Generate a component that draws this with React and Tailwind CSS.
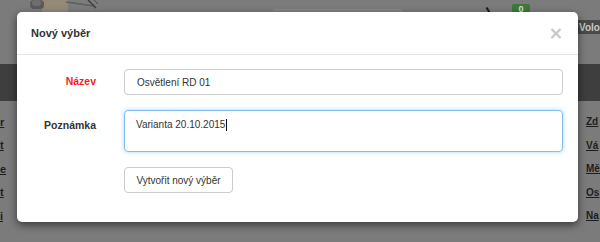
import React from "react";

const font = { fontFamily: '"Liberation Sans", Arial, sans-serif' };

function TopPhoto() {
  return (
    <svg width="72" height="14" viewBox="0 0 72 14" className="block">
      <rect x="0" y="0" width="72" height="14" fill="#7c7c7c" />
      <rect x="14" y="0" width="26" height="13" fill="#958a78" />
      <rect x="2" y="0" width="14" height="9" rx="4" fill="#5a5a5a" />
      <rect x="4" y="0" width="9" height="6" rx="3" fill="#6e6e6e" />
      <path d="M38 2 L66 6" stroke="#5e5e5e" strokeWidth="1.5" />
      <path d="M60 0 L68 8" stroke="#3e3e3e" strokeWidth="1.5" />
      <path d="M66 0 L70 4" stroke="#4a4a4a" strokeWidth="1" />
    </svg>
  );
}

function ListRow({ left, right }) {
  return (
    <div className="flex h-[23.5px] items-center justify-between">
      <span className="text-[11px] font-bold underline text-[#1e1e1e]">{left}</span>
      <span className="w-[14px] whitespace-nowrap text-[10px] font-bold underline text-[#1e1e1e]">
        {right}
      </span>
    </div>
  );
}

export default function App() {
  return (
    <div
      className="relative h-[242px] w-[600px] overflow-hidden bg-[#7b7b7b]"
      style={font}
    >
      {/* background page (dimmed) */}
      <div className="flex flex-col">
        <div className="flex h-[20px] items-start">
          <div className="ml-[28px]">
            <TopPhoto />
          </div>
          <div className="ml-[173px] mt-[9px] h-[8px] w-[129px] rounded-t-[3px] border border-b-0 border-[#8a8a8a] bg-[#818181]" />
          <div className="ml-[85px] mt-[7px] h-[6px] w-[2px] rotate-[-30deg] bg-[#1a1a1a]" />
          <div className="ml-[23px] mt-[4px] flex h-[14px] w-[18px] items-start justify-center rounded-[2px] bg-[#3d7a3a] text-[9px] font-bold leading-[10px] text-[#cfe3cf]">
            0
          </div>
        </div>
        <div className="flex h-[14px] justify-end">
          <div className="flex w-[22px] items-center bg-[#4a4a4a] pl-[1px] text-[10px] font-bold text-[#c9c9c9]">
            Volo
          </div>
        </div>
        <div className="h-[30px]" />
        <div className="h-[37px] bg-[#3e3e3e]" />
        <div className="mt-[9px] flex flex-col">
          <ListRow left="r" right="Zd" />
          <ListRow left="t" right="Vá" />
          <ListRow left="e" right="Mě" />
          <ListRow left="t" right="Os" />
          <ListRow left="i" right="Na" />
        </div>
      </div>

      {/* modal */}
      <div className="absolute left-[17px] top-[12px] w-[561px] rounded-[5px] bg-white shadow-[0_3px_9px_rgba(0,0,0,0.55)]">
        <div className="flex h-[43px] items-center justify-between border-b border-[#e5e5e5] pl-[14px] pr-[16px]">
          <span className="text-[11px] font-bold text-[#333333]">Nový výběr</span>
          <svg width="12" height="11" viewBox="0 0 12 11" className="mt-[1px]">
            <path d="M1.5 1 L10.5 10 M10.5 1 L1.5 10" stroke="#c6c6c6" strokeWidth="2.2" />
          </svg>
        </div>
        <div className="flex flex-col pb-[29px] pt-[14px]">
          <div className="flex items-center">
            <div className="w-[79px] text-right text-[10.5px] font-bold text-[#ff1a1a]">Název</div>
            <div className="ml-[28px] flex h-[26px] w-[439px] items-center rounded-[4px] border border-[#cccccc] pl-[12px] text-[10px] text-[#333333]">
              Osvětlení RD 01
            </div>
          </div>
          <div className="mt-[15px] flex items-start">
            <div className="mt-[8px] w-[79px] text-right text-[10.5px] font-bold leading-[14px] text-[#333333]">
              Poznámka
            </div>
            <div className="ml-[28px] flex h-[42px] w-[439px] items-start rounded-[4px] border border-[#80bcec] pl-[11px] pt-[7px] text-[10px] leading-[14px] text-[#333333] shadow-[0_0_4px_rgba(102,175,233,0.55)]">
              <span>Varianta 20.10.2015</span>
              <span className="ml-[1px] mt-[1px] h-[12px] w-[1px] bg-[#111111]" />
            </div>
          </div>
          <div className="ml-[107px] mt-[15px] flex h-[26px] w-[109px] items-center justify-center rounded-[4px] border border-[#cccccc] bg-white text-[10px] text-[#333333]">
            Vytvořit nový výběr
          </div>
        </div>
      </div>
    </div>
  );
}
